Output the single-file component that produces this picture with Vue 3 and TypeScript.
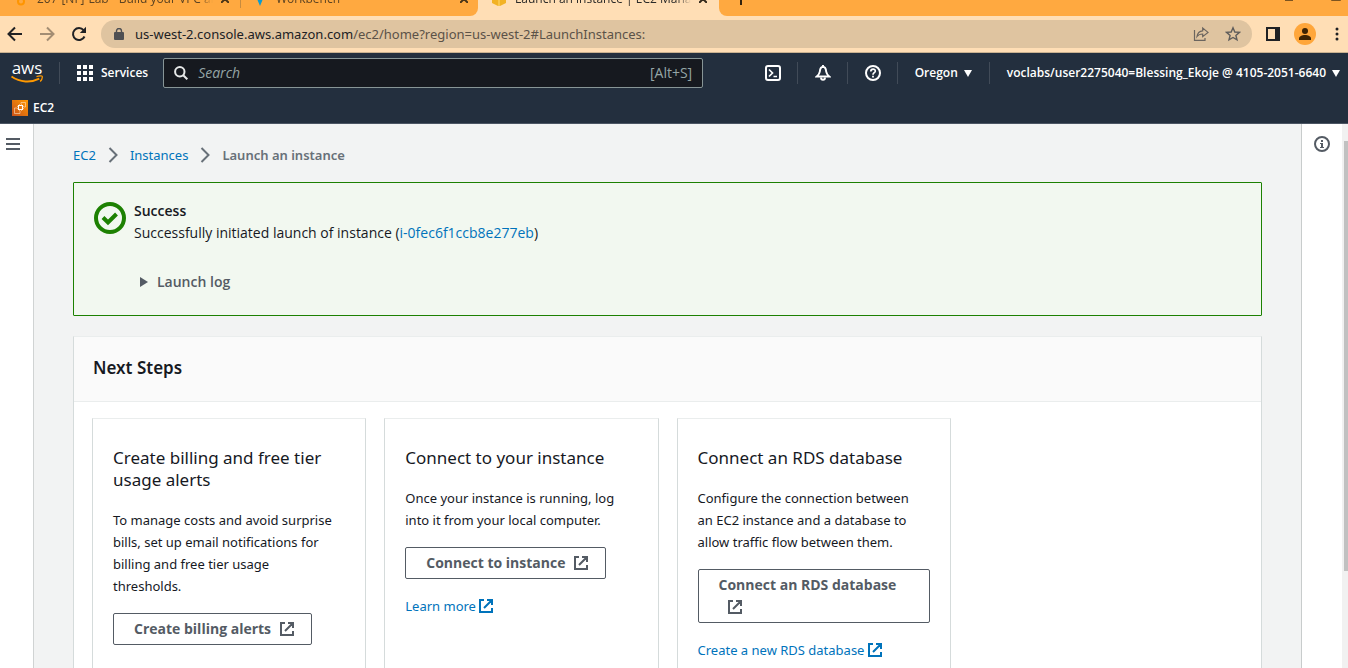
<script setup lang="ts">
interface Step {
  title: string
  text: string
  action: string
  link?: string
}

const steps: Step[] = [
  {
    title: 'Create billing and free tier usage alerts',
    text: 'To manage costs and avoid surprise bills, set up email notifications for billing and free tier usage thresholds.',
    action: 'Create billing alerts',
  },
  {
    title: 'Connect to your instance',
    text: 'Once your instance is running, log into it from your local computer.',
    action: 'Connect to instance',
    link: 'Learn more',
  },
  {
    title: 'Connect an RDS database',
    text: 'Configure the connection between an EC2 instance and a database to allow traffic flow between them.',
    action: 'Connect an RDS database',
    link: 'Create a new RDS database',
  },
]
</script>

<template>
  <div class="window">
    <div class="tabs">
      <div class="tab">
        <svg class="fav" viewBox="0 0 16 16" width="16" height="16"><path d="M4 3h8l-1 6H5z" fill="#ff9900" /><circle cx="8" cy="10.500" r="3" fill="none" stroke="#ff9500" stroke-width="2" /></svg>
        <span class="tab-title">207-[NF]-Lab - Build your VPC and</span>
        <button class="tab-x" aria-label="Close tab"><svg viewBox="0 0 8 8" width="8" height="8"><path d="M0 0L8 8M8 0L0 8" stroke="#4a3418" stroke-width="2" /></svg></button>
      </div>
      <div class="tab second">
        <svg class="fav" viewBox="0 0 16 16" width="16" height="16"><path d="M3 3h10L8 15z" fill="#0b9bd0" /></svg>
        <span class="tab-title">Workbench</span>
        <button class="tab-x" aria-label="Close tab"><svg viewBox="0 0 8 8" width="8" height="8"><path d="M0 0L8 8M8 0L0 8" stroke="#4a3418" stroke-width="2" /></svg></button>
      </div>
      <div class="tab active">
        <svg class="fav" viewBox="0 0 16 16" width="16" height="16"><path d="M1 1h6v14l-6-3zM9 1h6v11l-6 3z" fill="#f2b225" /><path d="M7 1h2v14H7z" fill="#f8c64d" /></svg>
        <span class="tab-title">Launch an instance | EC2 Management</span>
        <button class="tab-x" aria-label="Close tab"><svg viewBox="0 0 8 8" width="8" height="8"><path d="M0 0L8 8M8 0L0 8" stroke="#33291c" stroke-width="2" /></svg></button>
      </div>
      <div class="tab-rest">
        <button class="plus" aria-label="New tab"><svg viewBox="0 0 12 12" width="12" height="12"><path d="M6 0V12M0 6H12" stroke="#33220d" stroke-width="2" /></svg></button>
        <svg viewBox="0 0 56 12" width="56" height="12" fill="none" stroke="#7d5420"><path d="M0 7.500H8M46.500 0V7.500H55.500V0" /></svg>
      </div>
    </div>

    <div class="toolbar">
      <div class="history">
        <button aria-label="Back"><svg viewBox="0 0 16 16" width="16" height="16"><path d="M15 8H2M8 1.500L1.500 8L8 14.500" fill="none" stroke="#202124" stroke-width="2" /></svg></button>
        <button aria-label="Forward"><svg viewBox="0 0 16 16" width="16" height="16"><path d="M1 8H14M8 1.500L14.500 8L8 14.500" fill="none" stroke="#a38d73" stroke-width="2" /></svg></button>
        <button aria-label="Reload"><svg viewBox="0 0 16 16" width="16" height="16"><path d="M13.500 10.500A6 6 0 1 1 12.600 4.200" fill="none" stroke="#202124" stroke-width="2" /><path d="M15 .8V7H8.800z" fill="#202124" /></svg></button>
      </div>
      <div class="omnibox">
        <svg viewBox="0 0 10 12" width="10" height="12"><rect y="4" width="10" height="8" rx="1" fill="#4f5053" /><path d="M2.500 5V3a2.500 2.500 0 0 1 5 0v2" fill="none" stroke="#4f5053" stroke-width="1.400" /></svg>
        <span class="url"><span class="host">us-west-2.console.aws.amazon.com</span>/ec2/home?region=us-west-2#LaunchInstances:</span>
        <button aria-label="Share"><svg viewBox="0 0 16 16" width="16" height="16" fill="none" stroke="#6b655f" stroke-width="1.200"><path d="M1.500 4V14.400H12V12" /><path d="M4 10.500C4.500 6.500 6.500 5 9.700 4.800V2L15 6.400L9.700 10.600V8C7.500 8 5.500 8.500 4 10.500z" /></svg></button>
        <button aria-label="Bookmark"><svg viewBox="0 0 16 16" width="16" height="16"><path d="M8 1.800L9.800 6L14.400 6.400L10.900 9.400L12 13.900L8 11.500L4 13.900L5.100 9.400L1.600 6.400L6.200 6z" fill="none" stroke="#5f5d5b" stroke-width="1.400" /></svg></button>
      </div>
      <button aria-label="Side panel"><svg viewBox="0 0 14 14" width="14" height="14"><path d="M1 1h12v12H1z" fill="none" stroke="#202124" stroke-width="2" /><path d="M9 1h4v12H9z" fill="#202124" /></svg></button>
      <button aria-label="Profile"><svg viewBox="0 0 22 22" width="22" height="22"><circle cx="11" cy="11" r="11" fill="#ffa63a" /><circle cx="11" cy="8" r="3" fill="#3d2303" /><path d="M5 17v-1.500c0-2 3-3.500 6-3.500s6 1.500 6 3.500V17z" fill="#3d2303" /></svg></button>
      <button class="dots" aria-label="Menu"><svg viewBox="0 0 4 14" width="4" height="14" fill="#202124"><circle cx="2" cy="2" r="1.500" /><circle cx="2" cy="7" r="1.500" /><circle cx="2" cy="12" r="1.500" /></svg></button>
    </div>

    <header class="nav">
      <div class="nav-row">
        <a class="logo" href="#" aria-label="AWS home">
          <svg viewBox="0 0 32 22" width="32" height="22">
            <text x="16" y="12" text-anchor="middle" font-family="Open Sans, sans-serif" font-size="17" font-weight="500" fill="#fff">aws</text>
            <path d="M.5 14.500C9 20.500 20 21 28.300 16.700" fill="none" stroke="#ff9900" stroke-width="1.900" />
            <path d="M25.500 14.700C28 13.700 31 13.500 31.200 14.300C31.500 15.500 30.500 18.100 29.200 19.500" fill="none" stroke="#ff9900" stroke-width="1.300" />
          </svg>
        </a>
        <span class="rule"></span>
        <button class="services">
          <svg viewBox="0 0 16 16" width="16" height="16" fill="#fff"><path d="M0 0h4v4H0zM6 0h4v4H6zM12 0h4v4h-4zM0 6h4v4H0zM6 6h4v4H6zM12 6h4v4h-4zM0 12h4v4H0zM6 12h4v4H6zM12 12h4v4h-4z" /></svg>
          Services
        </button>
        <label class="search">
          <svg viewBox="0 0 14 14" width="14" height="14" fill="none" stroke="#e6e8e8" stroke-width="2"><circle cx="5.800" cy="5.800" r="4.700" /><path d="M9.200 9.200L13.300 13.300" /></svg>
          <input type="text" placeholder="Search" aria-label="Search" />
          <span class="hint">[Alt+S]</span>
        </label>
        <div class="nav-tools">
          <button class="nav-icon" aria-label="CloudShell"><svg viewBox="0 0 16 16" width="16" height="16" fill="none" stroke="#fff"><rect x="1" y="1" width="14" height="14" rx="2" stroke-width="2" /><path d="M4 4.500L7.500 8L4 11.500M8.500 11.500H12" stroke-width="1.700" /></svg></button>
          <span class="rule"></span>
          <button class="nav-icon" aria-label="Notifications"><svg viewBox="0 0 16 16" width="16" height="16" fill="none" stroke="#fff" stroke-width="1.900"><path d="M8 0V2M8 1.800C5.500 2 5 4.500 4.800 6.700C4.600 8.700 3.500 10 1.800 11.500H14.200C12.500 10 11.400 8.700 11.200 6.700C11 4.500 10.500 2 8 1.800z" /><path d="M6 12.500a2 2.300 0 0 0 4 0" /></svg></button>
          <span class="rule"></span>
          <button class="nav-icon" aria-label="Help"><svg viewBox="0 0 16 16" width="16" height="16" fill="none" stroke="#fff"><circle cx="8" cy="8" r="7" stroke-width="2" /><path d="M5.800 6.500C5.800 3.300 10.500 3.500 10.300 6.200C10.200 7.700 8 7.800 8 9.700" stroke-width="1.700" /><path d="M8 10.800V12.500" stroke-width="1.800" /></svg></button>
          <span class="rule"></span>
          <button class="nav-text region">Oregon <svg viewBox="0 0 8 7" width="8" height="7"><path d="M0 0H8L4 7z" fill="#fff" /></svg></button>
          <span class="rule"></span>
          <button class="nav-text account">voclabs/user2275040=Blessing_Ekoje @ 4105-2051-6640 <svg viewBox="0 0 8 7" width="8" height="7"><path d="M0 0H8L4 7z" fill="#fff" /></svg></button>
        </div>
      </div>
      <div class="favorites">
        <a href="#">
          <svg viewBox="0 0 16 16" width="16" height="16"><defs><linearGradient id="ec2" x1="0" y1="1" x2="1" y2="0"><stop offset="0" stop-color="#c8511b" /><stop offset="1" stop-color="#ff9900" /></linearGradient></defs><rect width="16" height="16" fill="url(#ec2)" /><path d="M6.500 5.500h4v4h-4z" fill="none" stroke="#fff" stroke-width="1.100" /><path d="M5 8H2.500v5.500H8V11M9 4V2.500h4.500V7H12M7.500 4V5.500M9.500 4V5.500M7.500 9.500V11M9.500 9.500V11M5 6.500H6.500M5 8.500H6.500M10.500 6.500H12M10.500 8.500H12" fill="none" stroke="#ffe0bd" stroke-width=".6" /></svg>
          EC2
        </a>
      </div>
    </header>

    <div class="page">
      <aside class="rail left"><button aria-label="Open navigation"><svg viewBox="0 0 14 12" width="14" height="12"><path d="M0 1H14M0 6H14M0 11H14" stroke="#545b64" stroke-width="2" /></svg></button></aside>

      <main class="content">
        <nav class="crumbs" aria-label="Breadcrumbs">
          <a href="#">EC2</a>
          <svg viewBox="0 0 10 16" width="10" height="16"><path d="M1.500 1L8.500 8L1.500 15" fill="none" stroke="#687078" stroke-width="2" /></svg>
          <a href="#">Instances</a>
          <svg viewBox="0 0 10 16" width="10" height="16"><path d="M1.500 1L8.500 8L1.500 15" fill="none" stroke="#687078" stroke-width="2" /></svg>
          <span class="here">Launch an instance</span>
        </nav>

        <section class="alert" role="status">
          <svg viewBox="0 0 32 32" width="32" height="32" fill="none" stroke="#1d8102" stroke-width="4"><circle cx="16" cy="16" r="14" /><path d="M9 15.500L14 20.500L22.500 12" /></svg>
          <div>
            <strong>Success</strong>
            <p>Successfully initiated launch of instance (<a href="#">i-0fec6f1ccb8e277eb</a>)</p>
            <button class="log"><svg viewBox="0 0 8 10" width="8" height="10"><path d="M0 0L8 5L0 10z" fill="#545b64" /></svg>Launch log</button>
          </div>
        </section>

        <section class="panel">
          <h2>Next Steps</h2>
          <div class="cards">
            <article v-for="s in steps" :key="s.title" class="card">
              <h3>{{ s.title }}</h3>
              <p>{{ s.text }}</p>
              <button class="action">{{ s.action }}<svg viewBox="0 0 14 14" width="14" height="14" fill="none" stroke="currentColor" stroke-width="2"><path d="M5 1H1V13H13V9M8 1H13V6M12.500 1.500L5 9" /></svg></button>
              <a v-if="s.link" class="more" href="#">{{ s.link }} <svg viewBox="0 0 14 14" width="14" height="14" fill="none" stroke="currentColor" stroke-width="2"><path d="M5 1H1V13H13V9M8 1H13V6M12.500 1.500L5 9" /></svg></a>
            </article>
          </div>
        </section>
      </main>

      <aside class="rail right"><button aria-label="Info"><svg viewBox="0 0 16 16" width="16" height="16"><circle cx="8" cy="8" r="7" fill="none" stroke="#545b64" stroke-width="2" /><path d="M7 4h2v2H7zM6 7h3v4h1v1H6v-1h1V8H6z" fill="#545b64" /></svg></button></aside>
      <div class="scroll"><div class="thumb"></div></div>
    </div>
  </div>
</template>

<style>
body {
  margin: 0;
}
</style>

<style scoped>
* {
  box-sizing: border-box;
}
.window {
  height: 100vh;
  overflow: hidden;
  display: flex;
  flex-direction: column;
  font-family: "Open Sans", "Noto Sans", sans-serif;
  font-size: 14px;
  line-height: 22px;
  color: #16191f;
}
button {
  font: inherit;
  color: inherit;
  background: none;
  border: 0;
  padding: 0;
}
svg {
  display: block;
  flex: none;
}
a {
  color: #0073bb;
  text-decoration: none;
}
h2, h3, p {
  margin: 0;
}

.tabs {
  flex: none;
  height: 16px;
  overflow: hidden;
  display: flex;
  align-items: flex-end;
  background: #ffdeb5;
  font-size: 12px;
  line-height: 34px;
}
.tab {
  width: 239px;
  height: 34px;
  display: flex;
  align-items: center;
  padding: 0 10px 0 13px;
  gap: 8px;
  background: #ffa940;
  color: #5c4322;
}
.tab.second {
  border-bottom-right-radius: 8px;
  background: linear-gradient(#c78b3f, #c78b3f) 1px 0 / 1px 26px no-repeat #ffa940;
}
.tab.active {
  width: 241px;
  padding-right: 12px;
  background: #ffdeb5;
  color: #2b2a28;
}
.tab-title {
  flex: 1;
  min-width: 0;
  overflow: hidden;
  white-space: nowrap;
  mask-image: linear-gradient(to right, #000 92%, transparent);
}
.tab-x {
  flex: none;
}
.tab-rest {
  flex: 1;
  height: 34px;
  display: flex;
  align-items: center;
  justify-content: space-between;
  padding: 0 7px 0 16px;
  background: #ffa940;
  border-bottom-left-radius: 8px;
}

.toolbar {
  flex: none;
  height: 37px;
  display: flex;
  align-items: center;
  gap: 14px;
  padding: 0 9px 0 7px;
  background: #ffdeb5;
  border-bottom: 1px solid #c9b190;
}
.history {
  display: flex;
  gap: 16px;
}
.dots {
  margin-left: 5px;
}
.omnibox {
  flex: 1;
  height: 28px;
  display: flex;
  align-items: center;
  gap: 16px;
  padding: 0 11px 0 13px;
  border-radius: 14px;
  background: #dfc4a0;
  font-family: "Noto Sans", sans-serif;
  font-size: 13px;
  color: #5b5248;
}
.omnibox .url {
  flex: 1;
  margin-left: -5px;
}
.host {
  color: #202124;
}

.nav {
  flex: none;
  height: 71px;
  background: #232f3e;
  border-bottom: 1px solid #4b5563;
  color: #fff;
  font-size: 12px;
  font-weight: 600;
}
.nav-row {
  height: 40px;
  display: flex;
  align-items: center;
  padding: 0 8px 0 11px;
}
.rule {
  width: 1px;
  height: 22px;
  background: #414b58;
}
.logo {
  margin-right: 16px;
}
.services {
  display: flex;
  align-items: center;
  gap: 8px;
  margin: 0 15px 0 17px;
}
.search {
  flex: 0 1 540px;
  height: 30px;
  display: flex;
  align-items: center;
  gap: 10px;
  padding: 0 10px;
  border: 1px solid #879596;
  border-radius: 2px;
  background: #16191f;
  font-size: 14px;
  font-weight: 400;
}
.search input {
  flex: 1;
  min-width: 0;
  border: 0;
  padding: 0;
  outline: 0;
  background: none;
  font: inherit;
  color: #fff;
}
.search input::placeholder {
  font-style: italic;
  color: #95a5a6;
  opacity: 1;
}
.hint {
  color: #95a5a6;
}
.nav-tools {
  margin-left: auto;
  display: flex;
  align-items: center;
}
.nav-icon {
  margin: 0 16px 0 17px;
}
.nav-text {
  display: flex;
  align-items: center;
  gap: 6px;
  white-space: nowrap;
}
.region {
  margin: 0 17px;
}
.account {
  margin-left: 17px;
}
.favorites {
  height: 30px;
  display: flex;
  align-items: center;
  padding: 0 12px;
}
.favorites a {
  display: flex;
  align-items: center;
  gap: 5px;
  color: #fff;
}

.page {
  flex: 1;
  min-height: 0;
  display: flex;
  background: #f2f3f3;
}
.rail {
  flex: none;
  background: #fff;
}
.left {
  width: 34px;
  padding: 10px 6px 0;
  border-right: 1px solid #d0d3d3;
}
.right {
  width: 41px;
  padding: 12px 0 0 12px;
  border-left: 1px solid #c8cccc;
}
.scroll {
  width: 6px;
  padding: 17px 0 0 2px;
  background: #f1f1f1;
}
.thumb {
  height: 430px;
  background: #c1c1c1;
}
.content {
  flex: 1;
  min-width: 0;
  padding: 20px 39px 0;
}
.crumbs {
  display: flex;
  align-items: center;
  gap: 12px;
  font-family: "Noto Sans", sans-serif;
  font-size: 13px;
}
.here {
  font-weight: 600;
  color: #687078;
}
.alert {
  margin-top: 16px;
  height: 134px;
  display: flex;
  gap: 8px;
  padding: 17px 20px;
  border: 1px solid #1d8102;
  border-radius: 1px;
  background: #f2f8f0;
}
.alert strong {
  display: block;
  font-weight: 600;
}
.alert > svg {
  margin-top: 2px;
}
.log {
  display: flex;
  align-items: center;
  gap: 9px;
  margin: 27px 0 0 6px;
  font-weight: 600;
  color: #545b64;
}
.panel {
  margin-top: 20px;
  background: #fff;
  border: 1px solid #d5dbdb;
  border-top-color: #eaeded;
  font-family: "Noto Sans", sans-serif;
  font-size: 13px;
}
.panel h2 {
  padding: 19px 19px 21px;
  font-size: 17px;
  line-height: 24px;
  font-weight: 600;
  background: #fafafa;
  border-bottom: 1px solid #eaeded;
}
.cards {
  display: grid;
  grid-template-columns: repeat(4, 1fr);
  gap: 18px;
  padding: 16px 18px;
}
.card {
  min-height: 300px;
  padding: 28px 20px;
  display: flex;
  flex-direction: column;
  align-items: flex-start;
  gap: 16px;
  border: 1px solid #d5dbdb;
  border-top-color: #eaeded;
}
.card h3 {
  font-size: 17px;
  font-weight: 400;
  padding-bottom: 2px;
}
.card p {
  padding-right: 6px;
}
.action {
  padding: 4px 17px 4px 20px;
  border: 1px solid #545b64;
  border-radius: 2px;
  color: #545b64;
  font-family: "Open Sans", sans-serif;
  font-size: 14px;
  font-weight: 700;
  text-align: left;
}
.action svg {
  display: inline-block;
  vertical-align: -2px;
  margin-left: 9px;
}
.more svg {
  display: inline-block;
  vertical-align: -2px;
}
</style>
